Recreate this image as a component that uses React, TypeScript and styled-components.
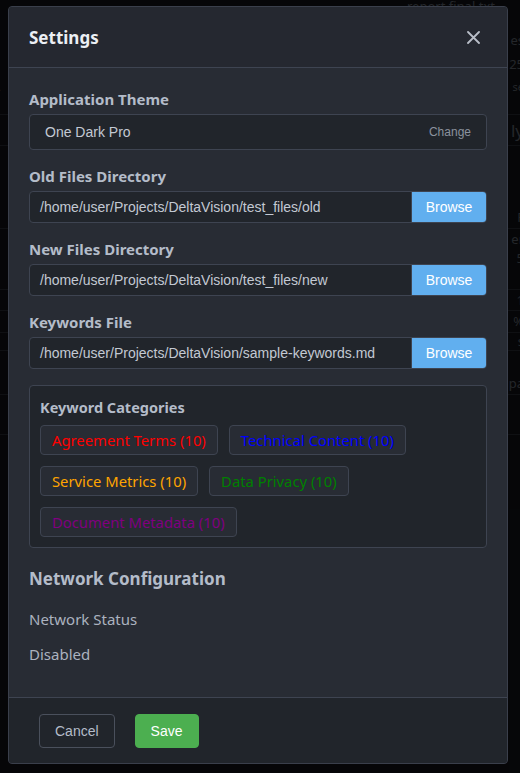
import React from "react";
import styled, { createGlobalStyle } from "styled-components";

const Global = createGlobalStyle`
  html, body { margin: 0; padding: 0; background: #0e0f13; }
  body { width: 520px; height: 773px; overflow: hidden; font-family: "Noto Sans", sans-serif; }
  * { box-sizing: border-box; }
`;

const Page = styled.div`
  position: relative;
  width: 520px;
  height: 773px;
  overflow: hidden;
  background: #0e0f13;
`;

const BgApp = styled.div`
  display: flex;
  flex-direction: column;
  color: #50555e;
  font-family: "Noto Sans", sans-serif;
  font-size: 13px;
`;

const BgRow = styled.div<{ $h: number; $line?: boolean; $pr?: number; $top?: boolean }>`
  height: ${(p) => p.$h}px;
  display: flex;
  align-items: ${(p) => (p.$top ? "flex-start" : "center")};
  justify-content: space-between;
  padding-right: ${(p) => p.$pr ?? 0}px;
  border-bottom: ${(p) => (p.$line ? "1px solid #22252b" : "none")};
  white-space: nowrap;
  line-height: 1;
`;

const BgLeft = styled.span`
  margin-left: -6px;
  font-size: 11px;
`;

const BgRight = styled.span<{ $size?: number }>`
  margin-right: -4px;
  font-size: ${(p) => p.$size ?? 13}px;
`;

const Overlay = styled.div`
  position: absolute;
  inset: 0;
  background: rgba(0, 0, 0, 0.55);
`;

const Modal = styled.div`
  position: absolute;
  left: 8px;
  top: 6px;
  width: 500px;
  height: 758px;
  background: #282c34;
  border: 1px solid #3a3f4b;
  border-radius: 4px;
  display: flex;
  flex-direction: column;
  overflow: hidden;
`;

const Header = styled.div`
  height: 61px;
  flex: none;
  display: flex;
  align-items: center;
  justify-content: space-between;
  padding: 0 26px 0 20px;
  background: #252830;
  border-bottom: 1px solid #3e4451;
`;

const Title = styled.h2`
  margin: 0;
  font-size: 17px;
  font-weight: 700;
  color: #eceff4;
`;

const CloseBtn = styled.button`
  border: none;
  background: none;
  padding: 0;
  width: 16px;
  height: 16px;
  display: flex;
  align-items: center;
  justify-content: center;
  cursor: pointer;
`;

const Body = styled.div`
  flex: 1;
  padding: 20px 20px 0 20px;
  display: flex;
  flex-direction: column;
`;

const Label = styled.div<{ $mt?: number }>`
  font-size: 15px;
  font-weight: 700;
  color: #b4bcc9;
  margin-top: ${(p) => p.$mt ?? 0}px;
  height: 22px;
  line-height: 22px;
`;

const ThemeBox = styled.div`
  margin-top: 4px;
  height: 36px;
  display: flex;
  align-items: center;
  justify-content: space-between;
  padding: 0 15px 0 15px;
  background: #21252b;
  border: 1px solid #3e4451;
  border-radius: 4px;
  font-family: "Liberation Sans", Arial, sans-serif;
`;

const ThemeName = styled.span`
  font-size: 14px;
  color: #c3c9d3;
`;

const ChangeLink = styled.span`
  font-size: 12px;
  color: #8b929e;
`;

const InputRow = styled.div`
  margin-top: 4px;
  height: 32px;
  display: flex;
  background: #21252b;
  border: 1px solid #3e4451;
  border-radius: 4px;
  overflow: hidden;
  font-family: "Liberation Sans", Arial, sans-serif;
`;

const PathText = styled.div`
  flex: 1;
  display: flex;
  align-items: center;
  padding-left: 10px;
  font-size: 14px;
  color: #c3c9d3;
  border-right: 1px solid #3e4451;
`;

const BrowseBtn = styled.button`
  width: 74px;
  border: none;
  background: #61afef;
  color: #ffffff;
  font-family: "Liberation Sans", Arial, sans-serif;
  font-size: 14px;
  padding: 0;
`;

const CategoryBox = styled.div`
  margin-top: 16px;
  padding: 11px 10px 10px 10px;
  background: #21252b;
  border: 1px solid #3e4451;
  border-radius: 4px;
`;

const CatTitle = styled.div`
  font-size: 14.5px;
  font-weight: 700;
  color: #b4bcc9;
  height: 20px;
  line-height: 20px;
  margin-bottom: 8px;
`;

const ChipWrap = styled.div`
  display: flex;
  flex-wrap: wrap;
  gap: 11px 11px;
`;

const Chip = styled.span<{ $c: string }>`
  height: 30px;
  display: inline-flex;
  align-items: center;
  padding: 0 11px;
  background: #282c34;
  border: 1px solid #3e4451;
  border-radius: 4px;
  color: ${(p) => p.$c};
  font-size: 14.8px;
`;

const SectionTitle = styled.div`
  margin-top: 19px;
  font-size: 17px;
  font-weight: 700;
  color: #b4bcc9;
  height: 24px;
  line-height: 24px;
`;

const PlainText = styled.div<{ $mt: number }>`
  margin-top: ${(p) => p.$mt}px;
  font-size: 15px;
  color: #abb2bf;
  height: 22px;
  line-height: 22px;
`;

const Footer = styled.div`
  flex: none;
  height: 66px;
  border-top: 1px solid #3e4451;
  background: #21252b;
  display: flex;
  align-items: center;
  gap: 20px;
  padding: 0 30px;
`;

const FooterBtn = styled.button<{ $primary?: boolean }>`
  height: 34px;
  padding: 0 15px;
  border-radius: 4px;
  font-family: "Liberation Sans", Arial, sans-serif;
  font-size: 14px;
  border: 1px solid ${(p) => (p.$primary ? "#4caf50" : "#4a505c")};
  background: ${(p) => (p.$primary ? "#4caf50" : "transparent")};
  color: ${(p) => (p.$primary ? "#ffffff" : "#b4bcc9")};
`;

const bgRows: { h: number; l?: string; r?: string; line?: boolean; s?: number; pr?: number; top?: boolean }[] = [
  { h: 12, r: "report    final.txt", pr: 29, top: true },
  { h: 18 },
  { h: 20, r: "es" },
  { h: 28, r: "25" },
  { h: 16, l: "t.", r: "se", s: 11 },
  { h: 21, line: true },
  { h: 31, r: "ly", line: true, s: 17 },
  { h: 60 },
  { h: 23, r: "F", line: true },
  { h: 21, r: "er" },
  { h: 16, r: "5" },
  { h: 24, line: true },
  { h: 21, r: "1", line: true },
  { h: 22, r: "%", line: true },
  { h: 18, r: "s", line: true },
  { h: 21 },
  { h: 23, r: "pa", line: true },
  { h: 40, line: true },
];

const categories = [
  { name: "Agreement Terms", color: "#ff0000" },
  { name: "Technical Content", color: "#0000ff" },
  { name: "Service Metrics", color: "#ffa500" },
  { name: "Data Privacy", color: "#008000" },
  { name: "Document Metadata", color: "#800080" },
];

export default function App() {
  return (
    <>
      <Global />
      <Page>
        <BgApp>
          {bgRows.map((r, i) => (
            <BgRow key={i} $h={r.h} $line={r.line} $pr={r.pr} $top={r.top}>
              <BgLeft>{r.l ?? ""}</BgLeft>
              <BgRight $size={r.s}>{r.r ?? ""}</BgRight>
            </BgRow>
          ))}
        </BgApp>
        <Overlay />
        <Modal>
          <Header>
            <Title>Settings</Title>
            <CloseBtn aria-label="Close">
              <svg width="13" height="13" viewBox="0 0 13 13">
                <path d="M1 1 L12 12 M12 1 L1 12" stroke="#b9bec8" strokeWidth="1.8" strokeLinecap="round" />
              </svg>
            </CloseBtn>
          </Header>
          <Body>
            <Label>Application Theme</Label>
            <ThemeBox>
              <ThemeName>One Dark Pro</ThemeName>
              <ChangeLink>Change</ChangeLink>
            </ThemeBox>
            <Label $mt={15}>Old Files Directory</Label>
            <InputRow>
              <PathText>/home/user/Projects/DeltaVision/test_files/old</PathText>
              <BrowseBtn>Browse</BrowseBtn>
            </InputRow>
            <Label $mt={15}>New Files Directory</Label>
            <InputRow>
              <PathText>/home/user/Projects/DeltaVision/test_files/new</PathText>
              <BrowseBtn>Browse</BrowseBtn>
            </InputRow>
            <Label $mt={15}>Keywords File</Label>
            <InputRow>
              <PathText>/home/user/Projects/DeltaVision/sample-keywords.md</PathText>
              <BrowseBtn>Browse</BrowseBtn>
            </InputRow>
            <CategoryBox>
              <CatTitle>Keyword Categories</CatTitle>
              <ChipWrap>
                {categories.map((c) => (
                  <Chip key={c.name} $c={c.color}>
                    {c.name} (10)
                  </Chip>
                ))}
              </ChipWrap>
            </CategoryBox>
            <SectionTitle>Network Configuration</SectionTitle>
            <PlainText $mt={17}>Network Status</PlainText>
            <PlainText $mt={13}>Disabled</PlainText>
          </Body>
          <Footer>
            <FooterBtn>Cancel</FooterBtn>
            <FooterBtn $primary>Save</FooterBtn>
          </Footer>
        </Modal>
      </Page>
    </>
  );
}
